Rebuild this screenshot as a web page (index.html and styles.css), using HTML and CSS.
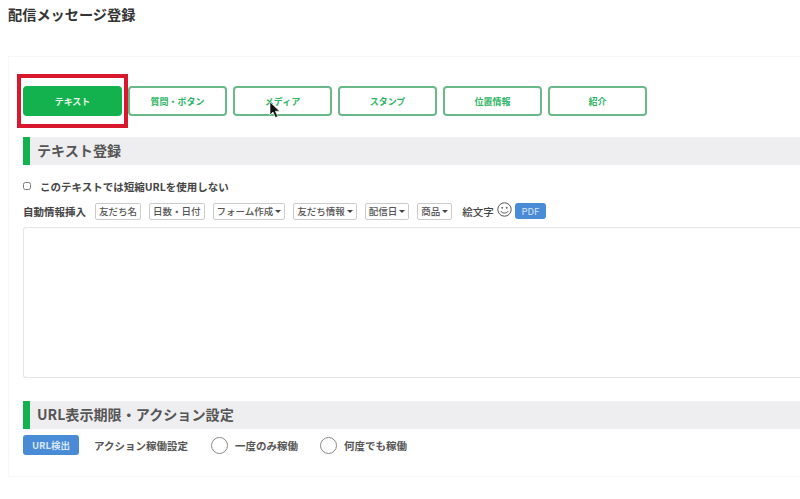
FILE: index.html
```html
<!DOCTYPE html>
<html lang="ja">
<head>
  <meta charset="UTF-8">
  <title>配信メッセージ登録</title>
  <link rel="stylesheet" href="styles.css">
</head>
<body>
  <h1 class="page-title">配信メッセージ登録</h1>
  <div class="panel">
    <div class="tabs">
      <button class="tab active">テキスト</button>
      <button class="tab">質問・ボタン</button>
      <button class="tab">メディア</button>
      <button class="tab">スタンプ</button>
      <button class="tab">位置情報</button>
      <button class="tab">紹介</button>
      <div class="highlight"></div>
      <svg class="cursor" width="12" height="18" viewBox="0 0 12 18">
        <path d="M1 1v13l3-3 2.400 5.500 2.400-1-2.400-5.300h4.300z" fill="#111" stroke="#fff" stroke-width="0.6"/>
      </svg>
    </div>

    <h2 class="section-title first">テキスト登録</h2>
    <label class="short-url"><input type="checkbox">このテキストでは短縮URLを使用しない</label>
    <div class="insert-row">
      <span class="insert-label">自動情報挿入</span>
      <button class="chip">友だち名</button>
      <button class="chip">日数・日付</button>
      <button class="chip caret">フォーム作成</button>
      <button class="chip caret">友だち情報</button>
      <button class="chip caret">配信日</button>
      <button class="chip caret">商品</button>
      <span class="emoji-label">絵文字</span>
      <svg class="smile" width="15" height="15" viewBox="0 0 15 15" fill="none" stroke="#555" stroke-width="1">
        <circle cx="7.500" cy="7.500" r="6.700"/>
        <circle cx="5.200" cy="5.800" r="0.500" fill="#555"/>
        <circle cx="9.800" cy="5.800" r="0.500" fill="#555"/>
        <path d="M3.800 9c1 2.700 6.400 2.700 7.400 0"/>
      </svg>
      <button class="btn-blue pdf">PDF</button>
    </div>
    <div class="text-area"></div>

    <h2 class="section-title second">URL表示期限・アクション設定</h2>
    <div class="action-row">
      <button class="btn-blue url-check">URL検出</button>
      <span class="action-label">アクション稼働設定</span>
      <label class="radio"><span class="radio-mark"></span>一度のみ稼働</label>
      <label class="radio"><span class="radio-mark"></span>何度でも稼働</label>
    </div>
  </div>
</body>
</html>
```

FILE: styles.css
```css
html, body {
  height: 100%;
  overflow: hidden;
}
body {
  font-family: "Noto Sans CJK JP", "Noto Sans", sans-serif;
  margin: 0;
  padding: 0 0 0 8px;
  background-color: #fff;
  color: #444;
}
button {
  font-family: inherit;
  cursor: pointer;
}
.page-title {
  margin: 0;
  padding-top: 4px;
  height: 56px;
  box-sizing: border-box;
  font-size: 14.200px;
  line-height: 20px;
  color: #333;
}
.panel {
  height: 421px;
  box-sizing: border-box;
  padding: 29px 0 0 14px;
  border: 1px solid #f7f7f7;
  border-right: none;
}
.tabs {
  position: relative;
  display: flex;
  gap: 6px;
}
.tab {
  width: 99px;
  height: 30px;
  padding: 0;
  background-color: #fff;
  border: 2px solid #6ab98a;
  border-radius: 4px;
  color: #2fb565;
  font-size: 9px;
  font-weight: 700;
}
.tab.active {
  background-color: #14b14f;
  border-color: #14b14f;
  color: #e4f5ea;
}
.highlight {
  position: absolute;
  left: -6px;
  top: -12px;
  width: 111px;
  height: 54px;
  box-sizing: border-box;
  border: 4px solid #d9182d;
}
.cursor {
  position: absolute;
  left: 246px;
  top: 15px;
}
.section-title {
  margin: 0;
  height: 28px;
  box-sizing: border-box;
  padding-left: 7px;
  background-color: #eeeef0;
  border-left: 7px solid #14b14f;
  font-size: 14.100px;
  line-height: 26px;
  color: #555;
}
.section-title.first {
  margin-top: 21px;
}
.section-title.second {
  margin-top: 23px;
}
.short-url {
  display: flex;
  align-items: center;
  margin-top: 13px;
  height: 16px;
  font-size: 10.500px;
  font-weight: 700;
  color: #444;
}
.short-url input {
  width: 8px;
  height: 8px;
  margin: 0 9px 0 0;
}
.insert-row {
  display: flex;
  align-items: center;
  margin-top: 8px;
  height: 18px;
  font-size: 10.500px;
  font-weight: 500;
}
.insert-label {
  margin-right: 9px;
  font-weight: 700;
}
.chip {
  height: 17px;
  margin-right: 8px;
  padding: 0 3px;
  background-color: #fff;
  border: 1px solid #ccc;
  border-radius: 2px;
  color: #555;
  font-size: 9.500px;
  font-weight: 500;
  line-height: 15px;
}
.chip.caret::after {
  content: "";
  display: inline-block;
  margin-left: 2px;
  vertical-align: middle;
  border-top: 3px solid #444;
  border-left: 3px solid transparent;
  border-right: 3px solid transparent;
}
.emoji-label {
  margin: 0 3px 0 2px;
}
.smile {
  margin: -3px 3px 0 0;
}
.btn-blue {
  padding: 0;
  background-color: #4a8bd6;
  border: none;
  border-radius: 3px;
  color: #d8e6f7;
  font-size: 9.500px;
}
.pdf {
  width: 31px;
  height: 16px;
}
.text-area {
  height: 151px;
  margin-top: 7px;
  box-sizing: border-box;
  border: 1px solid #e6e6e6;
  border-right: none;
  border-radius: 3px 0 0 3px;
}
.action-row {
  display: flex;
  align-items: center;
  margin-top: 6px;
  height: 20px;
  font-size: 10.500px;
  font-weight: 700;
  color: #555;
}
.url-check {
  width: 56px;
  height: 20px;
  margin-right: 15px;
  font-weight: 700;
}
.action-label {
  margin-right: 23px;
}
.radio {
  display: flex;
  align-items: center;
  margin-right: 22px;
}
.radio-mark {
  width: 15px;
  height: 15px;
  margin-right: 7px;
  background-color: #fff;
  border: 1px solid #888;
  border-radius: 50%;
}
```
